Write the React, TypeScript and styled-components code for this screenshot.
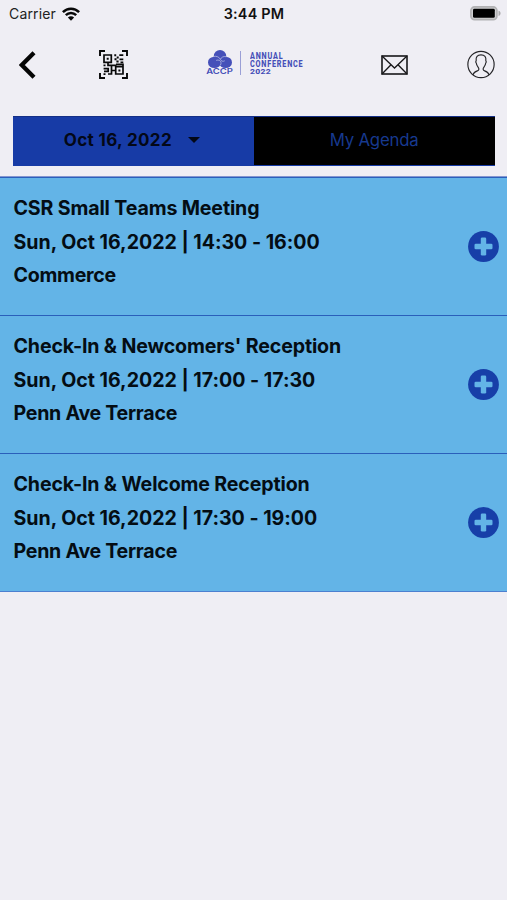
import React from "react";
import styled, { createGlobalStyle } from "styled-components";

const GlobalStyle = createGlobalStyle`
  * { box-sizing: border-box; }
  body { margin: 0; background: #efeef4; font-family: Inter, "Liberation Sans", sans-serif; color: #000; }
`;

const Screen = styled.div`
  width: 507px;
  height: 900px;
  background: #efeef4;
  overflow: hidden;
`;

const StatusBar = styled.div`
  height: 28px;
  display: grid;
  grid-template-columns: 1fr auto 1fr;
  align-items: center;
  padding: 0 6px 1px 9px;
`;

const Carrier = styled.div`
  display: flex;
  align-items: center;
  gap: 6px;
  font-size: 14px;
  letter-spacing: 0.15px;
  color: #222;
`;

const Clock = styled.div`
  margin-right: 2px;
  font-size: 14.4px;
  font-weight: 600;
  letter-spacing: 0.22px;
  color: #111;
`;

const Battery = styled.div`
  display: flex;
  justify-content: flex-end;
`;

const Header = styled.header`
  height: 73px;
  display: flex;
  align-items: center;
  padding: 0 12px 0 19px;
  svg { display: block; flex: none; }
`;

const IconSlot = styled.div<{ $before?: number }>`
  flex: none;
  margin-left: ${(p) => p.$before ?? 0}px;
`;

const Logo = styled.div`
  flex: none;
  display: flex;
  align-items: center;
  width: 98px;
  height: 29px;
  margin-left: 77px;
  color: #454fb8;
`;

const Emblem = styled.div`
  flex: none;
  width: 28px;
  padding: 0 0 3px 1px;
  display: flex;
  flex-direction: column;
  align-items: center;
`;

const EmblemName = styled.div`
  margin-top: -1px;
  font-size: 7.6px;
  line-height: 8px;
  font-weight: 600;
  transform: scaleX(1.25);
`;

const Divider = styled.div`
  flex: none;
  width: 1px;
  height: 24px;
  margin: 0 9px 3px 7px;
  background: #9a9fd6;
`;

const Conference = styled.div`
  flex: none;
  padding-bottom: 1px;
`;

const ConferenceLine = styled.div<{ $wide?: boolean }>`
  width: max-content;
  font-family: Roboto, sans-serif;
  font-size: ${(p) => (p.$wide ? 7.2 : 8.4)}px;
  line-height: 8.3px;
  font-weight: 800;
  letter-spacing: ${(p) => (p.$wide ? 0.2 : 0.95)}px;
  white-space: nowrap;
  transform: scaleX(${(p) => (p.$wide ? 1.2 : 0.86)});
  transform-origin: left center;
`;

const Tabs = styled.div`
  display: flex;
  height: 50px;
  margin: 15px 12.5px 0 13px;
  border-top: 1px solid #142f86;
  border-bottom: 1px solid #173ba6;
`;

const Tab = styled.button<{ $active?: boolean }>`
  width: 50%;
  display: flex;
  align-items: center;
  justify-content: center;
  gap: 16px;
  padding: ${(p) => (p.$active ? "0 3px 2px 0" : "0 0 2px")};
  border: 0;
  font: ${(p) => (p.$active ? 650 : 400)} ${(p) => (p.$active ? 17 : 16.8)}px Inter, sans-serif;
  letter-spacing: ${(p) => (p.$active ? 0.35 : -0.2)}px;
  color: ${(p) => (p.$active ? "#030817" : "#17398f")};
  background: ${(p) => (p.$active ? "#173ba6" : "#000")};
`;

const Caret = styled.span`
  border: 6px solid transparent;
  border-top-color: #030817;
  border-bottom: 0;
`;

const Agenda = styled.main`
  margin-top: 10px;
  border-top: 1px solid #8496d0;
  border-bottom: 1px solid #4c80d0;
`;

const Session = styled.article`
  height: 138px;
  display: flex;
  justify-content: space-between;
  padding: 14.3px 8px 0 13.5px;
  border-top: 1px solid #2a5fbb;
  background: #63b4e7;
`;

const SessionLine = styled.div<{ $track: number }>`
  font-size: 19.6px;
  line-height: 33.4px;
  font-weight: 670;
  letter-spacing: ${(p) => p.$track}px;
  white-space: nowrap;
  color: #040d14;
`;

const AddButton = styled.button`
  flex: none;
  width: 31px;
  height: 31px;
  margin-top: 39px;
  padding: 0;
  border: 0;
  background: none;
  svg { display: block; }
`;

const sessions = [
  { title: "CSR Small Teams Meeting", time: "Sun, Oct 16,2022 | 14:30 - 16:00", place: "Commerce" },
  { title: "Check-In & Newcomers' Reception", time: "Sun, Oct 16,2022 | 17:00 - 17:30", place: "Penn Ave Terrace" },
  { title: "Check-In & Welcome Reception", time: "Sun, Oct 16,2022 | 17:30 - 19:00", place: "Penn Ave Terrace" },
];

const WifiIcon = () => (
  <svg width="18" height="14" viewBox="0 0 18 14" fill="none" stroke="#080808" strokeWidth="2.5">
    <path d="M.9 5.1C5.4.5 12.6.5 17.1 5.1M3.8 8.2c3-2.9 7.4-2.9 10.4 0" />
    <path d="M5.9 10.5c1.8-1.7 4.4-1.7 6.2 0L9 13.7z" fill="#080808" stroke="none" />
  </svg>
);

const BatteryIcon = () => (
  <svg width="31" height="15" viewBox="0 0 31 15">
    <rect x=".9" y=".9" width="26" height="12.8" rx="3.7" fill="#cfcfd1" stroke="#b2b2b4" strokeWidth="1.7" />
    <rect x="3" y="2.8" width="21.8" height="9" rx="1.4" fill="#000" />
    <path d="M28.5 4.7c2.8.5 2.8 4.7 0 5.2z" fill="#ababad" />
  </svg>
);

const BackIcon = () => (
  <svg width="17" height="28" viewBox="0 0 17 28" fill="none" stroke="#050505" strokeWidth="4.3">
    <path d="M15 1.8 2.8 14 15 26.2" />
  </svg>
);

const QrIcon = () => (
  <svg width="29" height="29" viewBox="0 0 29 29" fill="none" stroke="#080808" strokeWidth="1.7">
    <path d="M1 6V1h5M23 1h5v5M28 23v5h-5M6 28H1v-5" strokeWidth="1.9" />
    <path d="M5 5h7.3v7.3H5zM16.7 16.7H24V24h-7.3zM9 12.5v2.8h7.7v1.4M17 14.3h7v2.4M12.5 15.3V24H9M4.6 18.7h4.6v2.6H5M12.5 20.5h4.2" />
    <path d="M7.7 7.7h2v2h-2zM19.4 19.4h2v2h-2zM15.3 4.3h1.9v2h-1.9zM20.3 4.3h4V6h-4zM15.5 8.2h2v2h-2zM17.7 6.4h2v2h-2zM20.5 8.4h3.8v1.8h-3.8zM17.4 10.4h2.2v2h-2.2zM21.5 11.6h2.8v1.6h-2.8zM4.5 23.2h2v1.7h-2zM4.5 14.6h2v1.7h-2z" fill="#080808" stroke="none" />
  </svg>
);

const EmblemIcon = () => (
  <svg width="24" height="19" viewBox="0 0 24 19">
    <g fill="#4550b9">
      <circle cx="12" cy="6.2" r="6.2" />
      <ellipse cx="6.4" cy="12.4" rx="6.4" ry="5.7" />
      <ellipse cx="17.6" cy="12.4" rx="6.4" ry="5.7" />
      <circle cx="12" cy="12" r="4" />
    </g>
    <path d="M5.5 6.5c3-.8 6 .6 7 3.1.6 1.5 2.4 2.2 4.2 1.2M18.4 6.7c-2.8-.7-5.2.5-6 2.7M8.2 10.4c2.6-1 5.1.5 4.8 3.1-.1 1.2-.7 2.2-1.7 2.8" fill="none" stroke="#b5bae2" strokeWidth=".8" />
  </svg>
);

const MailIcon = () => (
  <svg width="27" height="20" viewBox="0 0 27 20" fill="none" stroke="#171719" strokeWidth="1.6">
    <rect x="1" y="1" width="25" height="18" />
    <path d="m1 1 12.5 12L26 1M1 19l9-9.3M26 19l-9-9.3" strokeWidth="1.3" />
  </svg>
);

const ProfileIcon = () => (
  <svg width="28" height="29" viewBox="0 0 29 29" fill="none" stroke="#252528" strokeWidth="1.2">
    <circle cx="14.5" cy="14.5" r="13.6" />
    <path d="M6.2 25.1c.6-2.3 2.1-3.2 4.5-4 1.7-.6 1.9-1.9 1.2-3.2-1.1-1.4-2.2-2.8-2.3-4.9-.5-.5-.6-1.8-.1-2.5-.5-4.1 1.2-6 5-6s5.5 1.9 5 6c.5.7.4 2-.1 2.5-.1 2.1-1.2 3.5-2.3 4.9-.7 1.3-.5 2.6 1.2 3.2 2.4.8 3.9 1.7 4.5 4" />
  </svg>
);

const PlusIcon = () => (
  <svg width="31" height="31" viewBox="0 0 31 31">
    <circle cx="15.5" cy="15.5" r="15.4" fill="#173fa8" />
    <g fill="#63b4e7">
      <rect x="12.8" y="6.5" width="5.4" height="18" rx="1.3" />
      <rect x="6.5" y="12.8" width="18" height="5.4" rx="1.3" />
    </g>
  </svg>
);

export default function App() {
  return (
    <Screen>
      <GlobalStyle />
      <StatusBar>
        <Carrier>Carrier <WifiIcon /></Carrier>
        <Clock>3:44 PM</Clock>
        <Battery><BatteryIcon /></Battery>
      </StatusBar>
      <Header>
        <IconSlot><BackIcon /></IconSlot>
        <IconSlot $before={63}><QrIcon /></IconSlot>
        <Logo>
          <Emblem>
            <EmblemIcon />
            <EmblemName>ACCP</EmblemName>
          </Emblem>
          <Divider />
          <Conference>
            <ConferenceLine>ANNUAL</ConferenceLine>
            <ConferenceLine>CONFERENCE</ConferenceLine>
            <ConferenceLine $wide>2022</ConferenceLine>
          </Conference>
        </Logo>
        <IconSlot $before={78}><MailIcon /></IconSlot>
        <IconSlot $before={59}><ProfileIcon /></IconSlot>
      </Header>
      <Tabs>
        <Tab $active>Oct 16, 2022 <Caret /></Tab>
        <Tab>My Agenda</Tab>
      </Tabs>
      <Agenda>
        {sessions.map((s) => (
          <Session key={s.title}>
            <div>
              <SessionLine $track={-0.14}>{s.title}</SessionLine>
              <SessionLine $track={-0.02}>{s.time}</SessionLine>
              <SessionLine $track={-0.27}>{s.place}</SessionLine>
            </div>
            <AddButton aria-label="Add to agenda"><PlusIcon /></AddButton>
          </Session>
        ))}
      </Agenda>
    </Screen>
  );
}
